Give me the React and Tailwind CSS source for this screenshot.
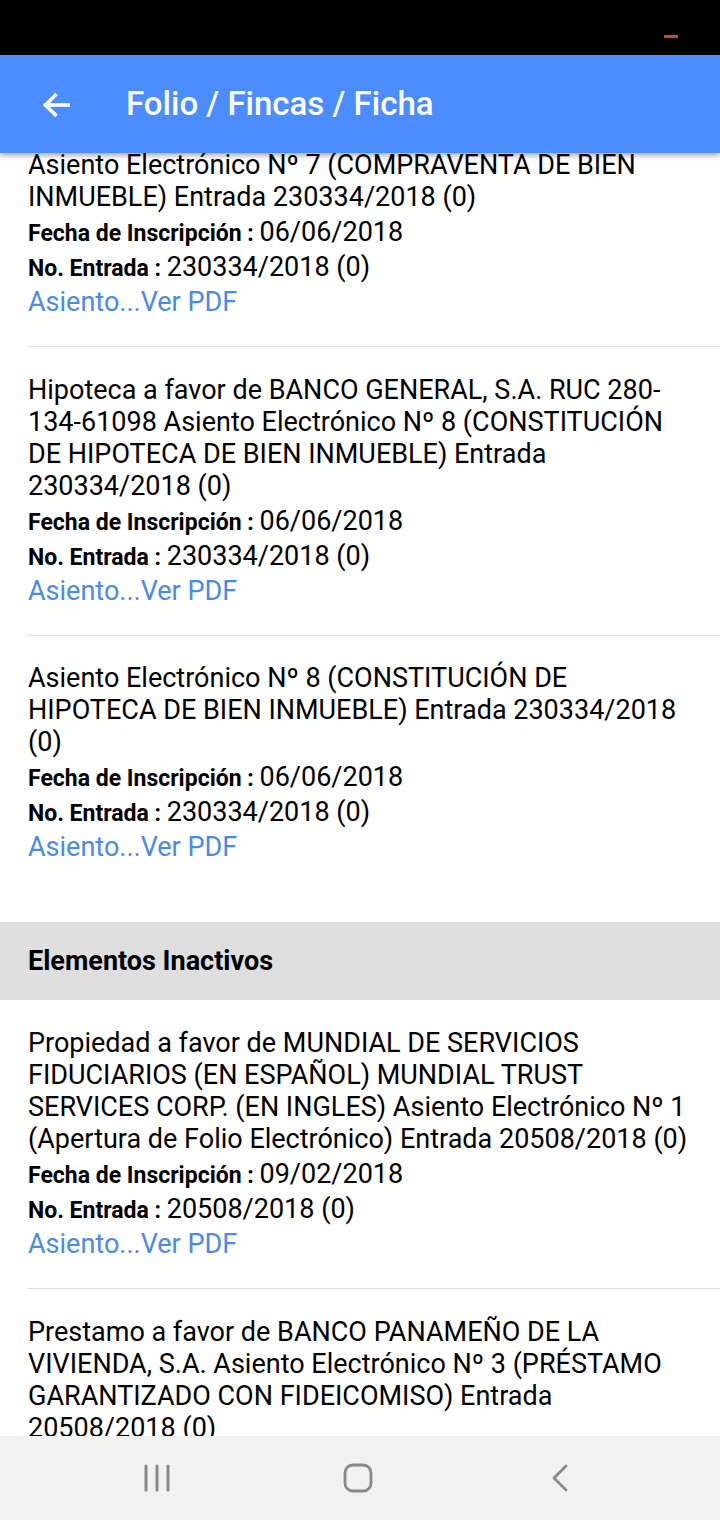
import React from "react";

const active = [
  {
    desc: "Asiento Electrónico Nº 7 (COMPRAVENTA DE BIEN INMUEBLE) Entrada 230334/2018 (0)",
    fecha: "06/06/2018",
    entrada: "230334/2018 (0)",
  },
  {
    desc: "Hipoteca a favor de BANCO GENERAL, S.A. RUC 280-134-61098 Asiento Electrónico Nº 8 (CONSTITUCIÓN DE HIPOTECA DE BIEN INMUEBLE) Entrada 230334/2018 (0)",
    fecha: "06/06/2018",
    entrada: "230334/2018 (0)",
  },
  {
    desc: "Asiento Electrónico Nº 8 (CONSTITUCIÓN DE HIPOTECA DE BIEN INMUEBLE) Entrada 230334/2018 (0)",
    fecha: "06/06/2018",
    entrada: "230334/2018 (0)",
  },
];

const inactive = [
  {
    desc: "Propiedad a favor de MUNDIAL DE SERVICIOS FIDUCIARIOS (EN ESPAÑOL) MUNDIAL TRUST SERVICES CORP. (EN INGLES) Asiento Electrónico Nº 1 (Apertura de Folio Electrónico) Entrada 20508/2018 (0)",
    fecha: "09/02/2018",
    entrada: "20508/2018 (0)",
  },
  {
    desc: "Prestamo a favor de BANCO PANAMEÑO DE LA VIVIENDA, S.A. Asiento Electrónico Nº 3 (PRÉSTAMO GARANTIZADO CON FIDEICOMISO) Entrada 20508/2018 (0)",
    fecha: "09/02/2018",
    entrada: "20508/2018 (0)",
  },
];

function Item({ item, last }) {
  return (
    <div className={last ? "pl-[28px] pt-[26px] pb-[58px]" : "pl-[28px]"}>
      <div className={last ? "pr-[24px]" : "pr-[24px] pt-[27px] pb-[27px] border-b border-[#dedede]"}>
        <div className="text-[27px] leading-[32px] text-black">{item.desc}</div>
        <div className="text-[27px] leading-[36px] text-black mt-[1px]">
          <span className="text-[23px] leading-none font-bold">Fecha de Inscripción : </span>
          <span>{item.fecha}</span>
        </div>
        <div className="text-[27px] leading-[35px] text-black">
          <span className="text-[23px] leading-none font-bold">No. Entrada : </span>
          <span>{item.entrada}</span>
        </div>
        <div className="text-[27px] leading-[34px] text-[#4a8ae8]">Asiento...Ver PDF</div>
      </div>
    </div>
  );
}

export default function App() {
  return (
    <div className="w-[720px] h-[1520px] flex flex-col overflow-hidden bg-white" style={{ fontFamily: "Roboto, 'Noto Sans', sans-serif" }}>
      <div className="h-[55px] bg-black flex-none flex items-start justify-end pr-[42px]">
        <div className="mt-[35px] w-[14px] h-[3px] bg-[#b5532a]" />
      </div>
      <div className="relative z-10 h-[98px] flex-none bg-[#4b8cff] flex items-center shadow-[0_3px_5px_rgba(0,0,0,0.3)]">
        <svg className="ml-[38px] mt-[2px]" width="36" height="36" viewBox="0 0 24 24" fill="none" stroke="white" strokeWidth="2.4" strokeLinecap="square">
          <path d="M20 12H5" />
          <path d="M11.5 5.5L5 12l6.5 6.5" />
        </svg>
        <div className="ml-[52px] text-white text-[33px] font-medium">Folio / Fincas / Ficha</div>
      </div>
      <div className="flex-1 overflow-hidden -mt-[31px]">
        {active.map((it, i) => (
          <Item key={i} item={it} last={i === active.length - 1} />
        ))}
        <div className="h-[78px] bg-[#dfdfdf] flex items-center pl-[28px]">
          <span className="text-[27px] font-bold text-black">Elementos Inactivos</span>
        </div>
        {inactive.map((it, i) => (
          <Item key={i} item={it} last={false} />
        ))}
      </div>
      <div className="h-[84px] flex-none bg-[#f1f1f1] flex items-center pl-[142px]">
        <svg width="30" height="30" viewBox="0 0 30 30" stroke="#888" strokeWidth="3" strokeLinecap="round">
          <path d="M4 3v24M15 3v24M26 3v24" />
        </svg>
        <svg className="ml-[170px]" width="32" height="32" viewBox="0 0 32 32" fill="none" stroke="#888" strokeWidth="2.8">
          <rect x="3" y="3" width="26" height="26" rx="8" />
        </svg>
        <svg className="ml-[176px]" width="20" height="30" viewBox="0 0 20 30" fill="none" stroke="#888" strokeWidth="2.8" strokeLinecap="round" strokeLinejoin="round">
          <path d="M16 3L4 15l12 12" />
        </svg>
      </div>
    </div>
  );
}
